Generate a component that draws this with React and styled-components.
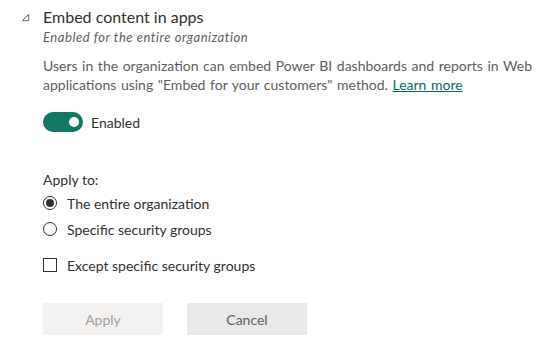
import styled, { createGlobalStyle } from "styled-components";

const Global = createGlobalStyle`
  body {
    margin: 0;
    background: #fff;
    font-family: Lato, "Open Sans", sans-serif;
    color: #323130;
  }
`;

export default function App() {
    return (
        <>
            <Global />
            <Panel>
                <Header>
                    <Caret viewBox="0 0 10 10">
                        <path d="M8.5 1.5 L8.5 8.5 L1.5 8.5 Z" fill="none" stroke="#605e5c" strokeWidth="1" />
                    </Caret>
                    <div>
                        <Title>Embed content in apps</Title>
                        <Subtitle>Enabled for the entire organization</Subtitle>
                    </div>
                </Header>
                <Body>
                    <Description>
                        Users in the organization can embed Power BI dashboards and reports in Web
                        applications using "Embed for your customers" method. <Link>Learn more</Link>
                    </Description>

                    <ToggleRow>
                        <Toggle><Thumb /></Toggle>
                        <Label>Enabled</Label>
                    </ToggleRow>

                    <ApplyLabel>Apply to:</ApplyLabel>
                    <Choice>
                        <Radio checked />
                        <Label>The entire organization</Label>
                    </Choice>
                    <Choice>
                        <Radio />
                        <Label>Specific security groups</Label>
                    </Choice>
                    <Choice $gap>
                        <Box />
                        <Label>Except specific security groups</Label>
                    </Choice>

                    <Buttons>
                        <Button disabled>Apply</Button>
                        <Button>Cancel</Button>
                    </Buttons>
                </Body>
            </Panel>
        </>
    )
}

const Panel = styled.div`
    padding: 6px 0 0 21px;
`

const Header = styled.div`
    display: flex;
    align-items: flex-start;
    gap: 13px;
`

const Caret = styled.svg`
    width: 9px;
    height: 9px;
    margin-top: 7px;
`

const Title = styled.div`
    font-size: 16px;
    line-height: 22px;
    color: #323130;
`

const Subtitle = styled.div`
    font-size: 13px;
    line-height: 18px;
    font-style: italic;
    letter-spacing: 0.55px;
    color: #605e5c;
`

const Body = styled.div`
    padding-left: 22px;
`

const Description = styled.div`
    margin-top: 10px;
    width: 500px;
    font-size: 14px;
    line-height: 19px;
    word-spacing: 1px;
    color: #605e5c;
`

const Link = styled.span`
    color: #0b6a5d;
    text-decoration: underline;
`

const ToggleRow = styled.div`
    display: flex;
    align-items: center;
    gap: 8px;
    margin-top: 18px;
`

const Toggle = styled.div`
    width: 40px;
    height: 20px;
    border-radius: 10px;
    background: #117865;
    position: relative;
`

const Thumb = styled.div`
    position: absolute;
    right: 4px;
    top: 5px;
    width: 10px;
    height: 10px;
    border-radius: 50%;
    background: #fff;
`

const Label = styled.span`
    font-size: 14px;
    color: #323130;
`

const ApplyLabel = styled.div`
    margin-top: 38px;
    font-size: 14px;
    line-height: 20px;
    color: #323130;
`

const Choice = styled.div`
    display: flex;
    align-items: center;
    gap: 10px;
    height: 26px;
    margin-top: ${p => (p.$gap ? "10px" : "0")};
`

const Radio = styled.span`
    width: 14px;
    height: 14px;
    box-sizing: border-box;
    border: 1px solid #323130;
    border-radius: 50%;
    position: relative;
    flex: none;

    &::after {
        content: "";
        display: ${p => (p.checked ? "block" : "none")};
        position: absolute;
        left: 2px;
        top: 2px;
        width: 8px;
        height: 8px;
        border-radius: 50%;
        background: #323130;
    }
`

const Box = styled.span`
    width: 14px;
    height: 14px;
    box-sizing: border-box;
    border: 1px solid #323130;
    flex: none;
`

const Buttons = styled.div`
    display: flex;
    gap: 24px;
    margin-top: 25px;
`

const Button = styled.button`
    width: 120px;
    height: 32px;
    border: none;
    border-radius: 0;
    font-family: inherit;
    font-size: 14px;
    background: ${p => (p.disabled ? "#f3f2f1" : "#e9e9e9")};
    color: ${p => (p.disabled ? "#a19f9d" : "#605e5c")};
`
